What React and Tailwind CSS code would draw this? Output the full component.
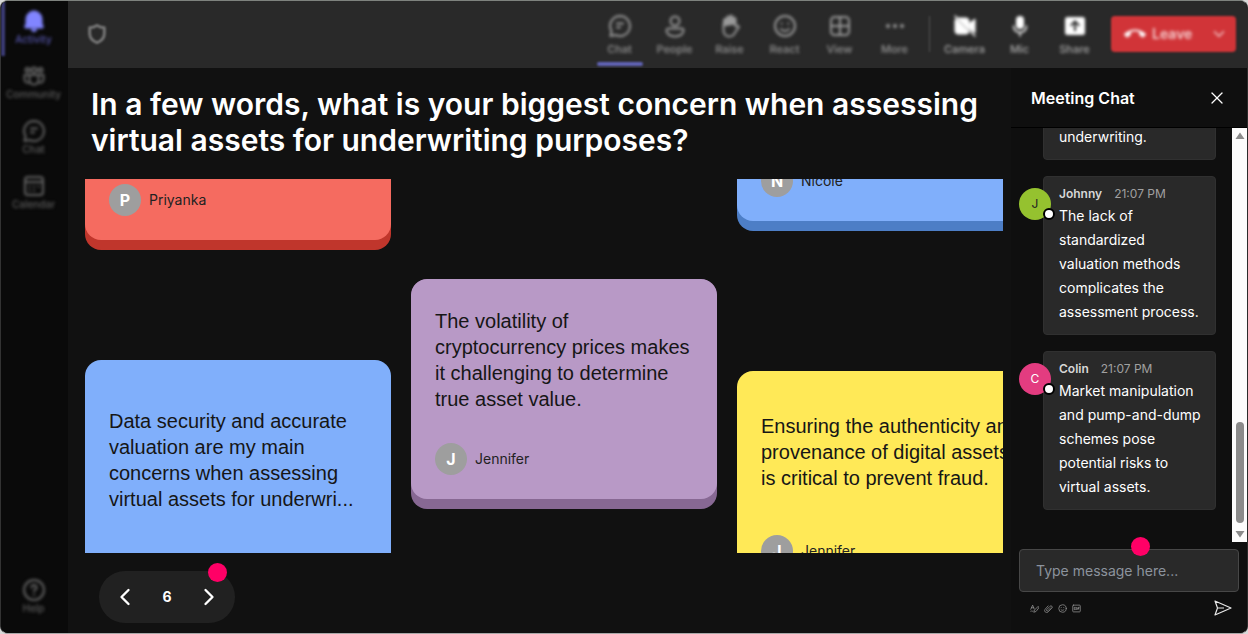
import { useState } from "react";
import { MdCallEnd } from "react-icons/md";
import { FiChevronDown, FiChevronLeft, FiChevronRight, FiX } from "react-icons/fi";

const Icon = ({ size = 24, className = "", children }) => (
    <svg
        width={size}
        height={size}
        viewBox="0 0 24 24"
        fill="none"
        stroke="currentColor"
        strokeWidth="2"
        strokeLinecap="round"
        strokeLinejoin="round"
        className={className}
        aria-hidden="true"
    >
        {children}
    </svg>
);

const BellIcon = () => (
    <Icon>
        <path fill="currentColor" strokeWidth="1" d="M12 2a8 8 0 0 0-8 8v4.500l-1.300 3.200c-.2.600.2 1.300.9 1.300h16.800c.7 0 1.100-.7.900-1.300L20 14.500V10a8 8 0 0 0-8-8z" />
        <path fill="currentColor" strokeWidth="0" d="M9 20h6a3 3 0 0 1-6 0z" />
    </Icon>
);

const CommunityIcon = () => (
    <Icon>
        <circle cx="12" cy="6" r="2.500" />
        <circle cx="5.500" cy="6" r="2" />
        <circle cx="18.500" cy="6" r="2" />
        <path d="M7.500 11h9v5a4.500 4.500 0 0 1-9 0z" />
        <path d="M7 11H2.500v4c0 2.500 2 4 4.500 3.800M17 11h4.500v4c0 2.500-2 4-4.500 3.800" />
    </Icon>
);

const ChatIcon = () => (
    <Icon>
        <path d="M12 2a10 10 0 1 1-4.600 18.900L2.500 22l1-4.900A10 10 0 0 1 12 2z" />
        <path d="M9 9.500h6M9 13.500h3" />
    </Icon>
);

const CalendarIcon = () => (
    <Icon>
        <rect x="3" y="3" width="18" height="18" rx="3" />
        <path d="M3 8h18M7.500 12.500h.1M12 12.500h.1M16.500 12.500h.1M7.500 16.500h.1M12 16.500h.1" />
    </Icon>
);

const HelpIcon = () => (
    <Icon>
        <circle cx="12" cy="12" r="10" />
        <path d="M9.500 9.500a2.500 2.500 0 1 1 3.700 2.200c-.8.500-1.200.9-1.200 1.800M12 16.800v.1" />
    </Icon>
);

const PeopleIcon = () => (
    <Icon>
        <circle cx="12" cy="7" r="4.500" />
        <path d="M5.500 14.500h13a2 2 0 0 1 2 2c0 3.600-3.800 6-8.500 6s-8.500-2.400-8.500-6a2 2 0 0 1 2-2z" />
    </Icon>
);

const HandIcon = () => (
    <Icon>
        <path fill="currentColor" strokeWidth="1" d="M5.500 12V6a1.500 1.500 0 0 1 3 0V3.500a1.500 1.500 0 0 1 3 0V2.500a1.500 1.500 0 0 1 3 0v2a1.500 1.500 0 0 1 3 0V10l-12 2z" />
        <path d="M5.500 10v6c0 4 2.500 6.500 6 6.500 3 0 4.500-1.500 5.500-4l4-5.500c-1-1.700-2.500-1.500-3.500-.5V5" />
    </Icon>
);

const SmileIcon = ({ size }) => (
    <Icon size={size}>
        <circle cx="12" cy="12" r="10" />
        <path d="M8 15c2 2.600 6 2.600 8 0M8.700 9.500v.2M15.300 9.500v.2" />
    </Icon>
);

const ViewIcon = () => (
    <Icon>
        <rect x="3" y="3" width="18" height="18" rx="3.500" />
        <path d="M12 3v18M3 12h18" />
    </Icon>
);

const MoreIcon = () => (
    <Icon>
        <path strokeWidth="4" d="M5 12h.01M12 12h.01M19 12h.01" />
    </Icon>
);

const CameraOffIcon = () => (
    <Icon>
        <path fill="currentColor" strokeWidth="1" d="M6 4h7a3 3 0 0 1 3 3v8L5 4zM3 5l13 13a3 3 0 0 1-3 2H5a3 3 0 0 1-3-3V7zM17 9l5-4v14l-5-4z" />
        <path strokeWidth="1.500" d="M2 2l20 20" />
    </Icon>
);

const MicIcon = () => (
    <Icon>
        <rect x="8" y="2" width="8" height="13" rx="4" fill="currentColor" strokeWidth="0" />
        <path strokeWidth="1.500" d="M5.500 12a6.500 6.500 0 0 0 13 0M12 18.500V22" />
    </Icon>
);

const ShareIcon = () => (
    <Icon>
        <path
            fill="currentColor"
            fillRule="evenodd"
            strokeWidth="0"
            d="M4.500 3h15A2.500 2.500 0 0 1 22 5.500v13a2.500 2.500 0 0 1-2.500 2.500h-15A2.500 2.500 0 0 1 2 18.500v-13A2.500 2.500 0 0 1 4.500 3zM12 6l-5 5 1.400 1.400L11 9.800V17h2V9.800l2.600 2.600L17 11z"
        />
    </Icon>
);

const ShieldIcon = () => (
    <Icon size={22}>
        <path strokeWidth="3" d="M12 2.500c2.500 1.800 5 2.500 8 2.500v6.500c0 5-3 8-8 10-5-2-8-5-8-10V5c3 0 5.500-.7 8-2.500z" />
    </Icon>
);

const FormatIcon = () => (
    <Icon size={9}>
        <path d="M2 14L7 3l4 10M4 10h6M21 7l-9 9-2 6 6-2 7-9zM2 19c3-2 3 2 6 0" />
    </Icon>
);

const ClipIcon = () => (
    <Icon size={9}>
        <path d="M18 10l-8 8a2 2 0 0 1-3-3l9-9a3.500 3.500 0 0 1 5 5l-10 10a5 5 0 0 1-8-7l8-9" />
    </Icon>
);

const GifIcon = () => (
    <Icon size={9}>
        <rect x="2" y="3" width="20" height="18" rx="2" />
        <path d="M9 9H6v6h3v-2M12.500 9v6M19 9h-3v6M16 12h2" />
    </Icon>
);

const SendIcon = () => (
    <svg width="20" height="18" viewBox="0 0 20 18" fill="none" stroke="currentColor" strokeWidth="1.200" strokeLinejoin="round" aria-hidden="true">
        <path d="M2 2l16 7-16 7 2.500-7zM4.500 9H11" />
    </svg>
);

const sideItems = [
    { label: "Activity", icon: <BellIcon />, active: true },
    { label: "Community", icon: <CommunityIcon /> },
    { label: "Chat", icon: <ChatIcon /> },
    { label: "Calendar", icon: <CalendarIcon /> },
];

const toolItems = [
    { label: "Chat", icon: <ChatIcon />, active: true },
    { label: "People", icon: <PeopleIcon /> },
    { label: "Raise", icon: <HandIcon /> },
    { label: "React", icon: <SmileIcon /> },
    { label: "View", icon: <ViewIcon /> },
    { label: "More", icon: <MoreIcon /> },
];

const deviceItems = [
    { label: "Camera", icon: <CameraOffIcon /> },
    { label: "Mic", icon: <MicIcon /> },
    { label: "Share", icon: <ShareIcon /> },
];

const messages = [
    {
        name: "Johnny",
        time: "21:07 PM",
        color: "bg-[#95c22f] text-[#222222]",
        text: "The lack of standardized valuation methods complicates the assessment process.",
    },
    {
        name: "Colin",
        time: "21:07 PM",
        color: "bg-[#e33c80] text-white",
        text: "Market manipulation and pump-and-dump schemes pose potential risks to virtual assets.",
    },
];

const SideButton = ({ label, icon, active }) => (
    <button
        className={`flex h-[55px] w-full flex-col items-center border-l-4 pr-[6px] pt-2 text-[10px] leading-3 font-medium blur-[1px] ${active
            ? "border-[#3d3d78] text-[#5656ad]"
            : "border-transparent text-[#5c5c5c]"
            }`}
    >
        <span className={`blur-[1px] ${active ? "text-[#8185ff]" : "text-[#646464]"}`}>{icon}</span>
        <span className="blur-[1px]">{label}</span>
    </button>
);

const ToolButton = ({ label, icon, active, bright }) => (
    <button
        className={`flex h-full w-[55px] flex-col items-center pt-[13px] text-[11px] leading-4 font-medium blur-[1px] ${bright ? "text-[#a8a8a8]" : "text-[#949494]"
            }`}
    >
        <span className={`blur-[1px] ${bright ? "text-white" : "text-[#9a9a9a]"}`}>{icon}</span>
        <span className="pt-[3px] blur-[1px]">{label}</span>
        {active && <span className="mt-[5px] h-1 w-[46px] rounded-full bg-[#6264b8]"></span>}
    </button>
);

const Person = ({ name }) => (
    <div className="flex shrink-0 items-center gap-2">
        <span className="flex size-8 items-center justify-center rounded-full bg-[#9e9e9e] text-base font-bold text-white">
            {name[0]}
        </span>
        <span className="text-sm text-[#222222]">{name}</span>
    </div>
);

const AnswerCard = ({ name, text, face, edge, className = "" }) => (
    <article className={`flex shrink-0 flex-col overflow-hidden rounded-b-2xl pb-[10px] ${edge} ${className}`}>
        <div className={`flex min-h-0 flex-1 flex-col justify-end rounded-b-2xl px-6 pb-6 ${face}`}>
            {text && (
                <p className="mb-[31px] font-['Liberation_Sans',Arial,sans-serif] text-xl leading-[26px] text-[#161616]">
                    {text}
                </p>
            )}
            <Person name={name} />
        </div>
    </article>
);

const Message = ({ name, time, color, text }) => (
    <li className="flex items-start">
        <span className={`relative z-10 mt-3 -mr-2 flex size-8 shrink-0 items-center justify-center rounded-full text-xs ${color}`}>
            {name[0]}
            <span className="absolute -right-1 bottom-0 size-3 rounded-full border-2 border-black bg-white"></span>
        </span>
        <div className="min-w-0 flex-1 rounded border border-[#303030] bg-[#292929] pt-[7px] pr-2 pb-[10px] pl-[15px]">
            <p className="flex items-center gap-3 text-xs leading-5">
                <span className="font-semibold text-[#d6d6d6]">{name}</span>
                <time className="text-[#a0a0a0]">{time}</time>
            </p>
            <p className="text-sm leading-6 text-white">{text}</p>
        </div>
    </li>
);

const MeetingChat = () => {
    const [draft, setDraft] = useState("");

    return (
        <aside className="flex w-[236px] shrink-0 flex-col bg-[#0f0f0f]">
            <div className="flex h-[60px] shrink-0 items-center justify-between border-b border-black px-5">
                <h2 className="text-base font-semibold text-white">Meeting Chat</h2>
                <button aria-label="Close chat" className="text-white">
                    <FiX size={20} strokeWidth={1.5} />
                </button>
            </div>

            <div className="flex min-h-0 flex-1">
                <ul className="flex min-w-0 flex-1 flex-col justify-end gap-4 overflow-hidden pr-4 pb-8 pl-2">
                    <li className="ml-6 rounded border border-[#303030] bg-[#292929] px-[15px] pb-[10px] text-sm leading-6 text-white">
                        underwriting.
                    </li>
                    {messages.map((message) => (
                        <Message key={message.name} {...message} />
                    ))}
                </ul>
                <div className="flex w-[15px] shrink-0 flex-col items-center justify-end bg-[#fcfcfc] pb-1" aria-hidden="true">
                    <svg width="10" height="8" viewBox="0 0 10 8" className="mt-1 mb-auto fill-[#8b8b8b]">
                        <path d="M5 0.500L9.500 7h-9z" />
                    </svg>
                    <span className="mb-[7px] h-[101px] w-2 rounded-full bg-[#8b8b8b]"></span>
                    <svg width="10" height="8" viewBox="0 0 10 8" className="fill-[#8b8b8b]">
                        <path d="M5 7.500L9.500 1h-9z" />
                    </svg>
                </div>
            </div>

            <form className="relative shrink-0 px-2 pt-[7px] pb-[9px]" onSubmit={(e) => e.preventDefault()}>
                <input
                    type="text"
                    aria-label="Message"
                    value={draft}
                    onChange={(e) => setDraft(e.target.value)}
                    placeholder="Type message here..."
                    className="block h-[43px] w-full rounded border border-[#474747] bg-[#292929] px-4 text-sm text-white placeholder:text-[#8c939d]"
                />
                <span className="absolute top-[-5px] left-[120px] size-[19px] rounded-full bg-[#ff0066]"></span>
                <div className="flex h-8 items-center gap-[5px] pr-[6px] pl-[11px] text-[#949494]">
                    <button type="button" aria-label="Format"><FormatIcon /></button>
                    <button type="button" aria-label="Attach"><ClipIcon /></button>
                    <button type="button" aria-label="Emoji"><SmileIcon size={9} /></button>
                    <button type="button" aria-label="GIF"><GifIcon /></button>
                    <button type="submit" aria-label="Send" className="ml-auto text-[#e8e8e8]"><SendIcon /></button>
                </div>
            </form>
        </aside>
    );
};

const App = () => {
    const [page, setPage] = useState(6);

    return (
        <div className="h-screen bg-[#d9d9d9] font-[Inter,sans-serif]">
            <div className="flex h-full overflow-hidden rounded-lg border border-t-[#7e827e] border-r-[#2b2b2b] border-b-[#a8a8a8] border-l-[#333333] bg-[#111111]">
                <nav className="flex w-[67px] shrink-0 flex-col justify-between bg-[#0a0a0a] pb-2">
                    <div>
                        {sideItems.map((item) => (
                            <SideButton key={item.label} {...item} />
                        ))}
                    </div>
                    <SideButton label="Help" icon={<HelpIcon />} />
                </nav>

                <div className="flex min-w-0 flex-1 flex-col">
                    <header className="flex h-[67px] shrink-0 items-center justify-between bg-[#292929] pr-[11px] pb-px pl-[18px]">
                        <span className="text-[#7a7a7a] blur-[1px]"><ShieldIcon /></span>
                        <div className="flex h-full items-center">
                            {toolItems.map((item) => (
                                <ToolButton key={item.label} {...item} />
                            ))}
                            <span className="mx-[7px] h-9 w-px bg-[#545454] blur-[1px]"></span>
                            {deviceItems.map((item) => (
                                <ToolButton key={item.label} {...item} bright />
                            ))}
                            <div className="ml-[9px] flex h-9 w-[125px] items-center justify-between rounded bg-[#d13438] pr-2 pl-[13px] text-[#f5cfd0] blur-[1px]">
                                <button className="flex items-center gap-1.5 text-sm font-semibold blur-[1px]">
                                    <MdCallEnd size={22} className="text-white" />
                                    Leave
                                </button>
                                <button aria-label="Leave options" className="blur-[1px]"><FiChevronDown size={18} /></button>
                            </div>
                        </div>
                    </header>

                    <div className="flex min-h-0 flex-1">
                        <main className="flex min-w-0 flex-1 flex-col pt-[18px] pb-[10px]">
                            <h1 className="pr-5 pl-[23px] text-3xl leading-9 font-semibold text-white">
                                In a few words, what is your biggest concern when assessing virtual assets for underwriting purposes?
                            </h1>

                            <section className="mt-[21px] mr-2 ml-[17px] flex min-h-0 flex-1 gap-5 overflow-hidden">
                                <div className="flex w-[306px] shrink-0 flex-col gap-[110px]">
                                    <AnswerCard name="Priyanka" face="bg-[#f56b60]" edge="bg-[#c0362c]" className="h-[71px]" />
                                    <article className="min-h-0 flex-1 rounded-t-2xl bg-[#80affb] px-6 pt-12">
                                        <p className="font-['Liberation_Sans',Arial,sans-serif] text-xl leading-[26px] text-[#161616]">
                                            Data security and accurate valuation are my main concerns when assessing virtual assets for underwri...
                                        </p>
                                    </article>
                                </div>
                                <div className="flex w-[306px] shrink-0 flex-col pt-[100px]">
                                    <AnswerCard
                                        name="Jennifer"
                                        text="The volatility of cryptocurrency prices makes it challenging to determine true asset value."
                                        face="rounded-t-2xl bg-[#b899c6]"
                                        edge="rounded-t-2xl bg-[#876893]"
                                        className="h-[230px]"
                                    />
                                </div>
                                <div className="flex w-[306px] shrink-0 flex-col gap-[140px]">
                                    <AnswerCard name="Nicole" face="bg-[#80affb]" edge="bg-[#4d7ec6]" className="h-[52px]" />
                                    <article className="rounded-t-2xl bg-[#ffe957] px-6 pt-[42px] pb-6">
                                        <p className="mb-11 font-['Liberation_Sans',Arial,sans-serif] text-xl leading-[26px] text-[#161616]">
                                            Ensuring the authenticity and provenance of digital assets is critical to prevent fraud.
                                        </p>
                                        <Person name="Jennifer" />
                                    </article>
                                </div>
                            </section>

                            <div className="relative mt-[18px] ml-[31px] flex h-[52px] w-[136px] shrink-0 items-center justify-between rounded-full bg-[#212121] px-3 text-white">
                                <button aria-label="Previous" onClick={() => setPage(page - 1)}><FiChevronLeft size={28} /></button>
                                <span className="text-sm font-bold">{page}</span>
                                <button aria-label="Next" onClick={() => setPage(page + 1)}><FiChevronRight size={28} /></button>
                                <span className="absolute -top-2 right-2 size-[19px] rounded-full bg-[#ff0066]"></span>
                            </div>
                        </main>

                        <MeetingChat />
                    </div>
                </div>
            </div>
        </div>
    );
};

export default App;
